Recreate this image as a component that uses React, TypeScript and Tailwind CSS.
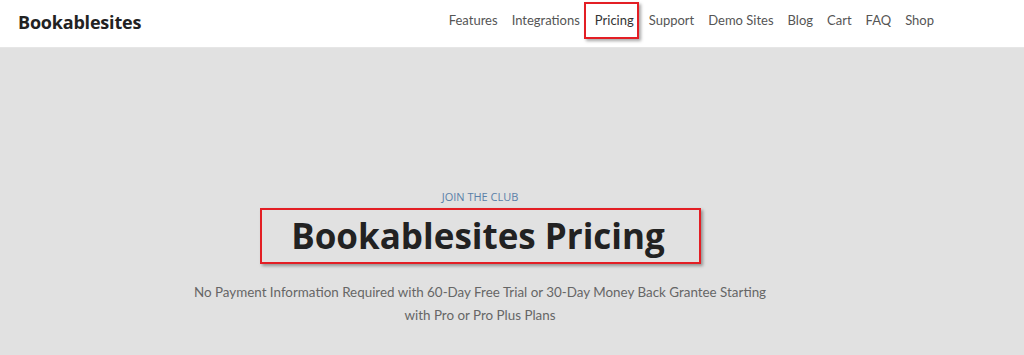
import React from "react";

const nav = ["Features", "Integrations", "Pricing", "Support", "Demo Sites", "Blog", "Cart", "FAQ", "Shop"];

export default function App() {
  return (
    <div className="w-[1024px] h-[355px] bg-[#e1e1e1] overflow-hidden" style={{ fontFamily: '"Open Sans", "Noto Sans", sans-serif' }}>
      <header className="h-[48px] bg-white border-b border-[#e6e6e6] flex items-center justify-between pl-[18px] pr-[90px]">
        <div className="text-[18px] font-bold text-[#222] tracking-[-0.2px] -mt-[2px]">Bookablesites</div>
        <nav className="flex items-center gap-[14px] text-[13px] text-[#555] -mt-[6px]" style={{ fontFamily: 'Lato, "Open Sans", sans-serif' }}>
          {nav.map((n) =>
            n === "Pricing" ? (
              <span key={n} className="border-2 border-[#e31e24] pl-[9px] pr-[3px] py-[7px] -ml-[10px] -mr-[4px] shadow-[2px_2px_3px_rgba(0,0,0,0.35)] text-[#333]">
                {n}
              </span>
            ) : (
              <span key={n}>{n}</span>
            )
          )}
        </nav>
      </header>
      <main className="flex flex-col items-center pt-[141px] pr-[64px]">
        <div className="text-[11px] text-[#5a7fa8] uppercase">Join the club</div>
        <div className="mt-[2px] w-[441px] h-[56px] border-2 border-[#e31e24] shadow-[2px_2px_3px_rgba(0,0,0,0.35)] flex items-center justify-center">
          <h1 className="text-[35px] font-bold text-[#222] leading-none -ml-[4px]">Bookablesites Pricing</h1>
        </div>
        <p className="mt-[17px] w-[600px] text-center text-[13.4px] leading-[23px] text-[#666]" style={{ fontFamily: 'Lato, "Open Sans", sans-serif' }}>
          No Payment Information Required with 60-Day Free Trial or 30-Day Money Back Grantee Starting with Pro or Pro Plus Plans
        </p>
      </main>
    </div>
  );
}
